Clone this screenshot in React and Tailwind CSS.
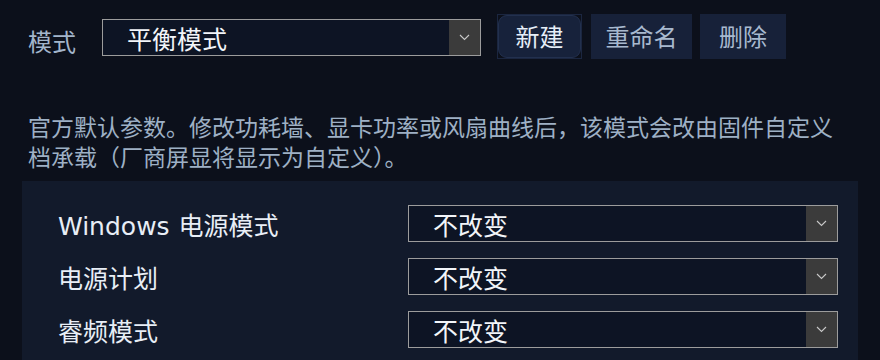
import { useState } from 'react';

const FONT = { fontFamily: '"Noto Sans", "Noto Sans CJK SC", sans-serif' };
const LATIN = { fontFamily: '"DejaVu Sans", "Noto Sans CJK SC", sans-serif' };

function Chevron() {
  return (
    <svg width="11" height="7" viewBox="0 0 11 7" fill="none">
      <path d="M1 1l4.5 4.5L10 1" stroke="#c9c9c9" strokeWidth="1.1" />
    </svg>
  );
}

function Select({ value, className = '' }) {
  return (
    <div className={`flex h-[37px] border border-[#9c9c9c] bg-[#0d1424] ${className}`}>
      <div className="flex-1 flex items-center pl-[24px] text-[25px] text-[#f2f5f9] leading-none pt-[3px]">{value}</div>
      <div className="w-[31px] bg-[#3b3b3b] flex items-center justify-center">
        <Chevron />
      </div>
    </div>
  );
}

const ROWS = [
  { label: '电源模式', prefix: 'Windows', value: '不改变' },
  { label: '电源计划', value: '不改变' },
  { label: '睿频模式', value: '不改变' },
];

export default function App() {
  const [mode] = useState('平衡模式');

  return (
    <div className="w-[880px] h-[360px] overflow-hidden bg-[#0c101b]" style={FONT}>
      {/* 顶部：模式选择 + 按钮 */}
      <div className="flex items-start pl-[28px] pt-[14px]">
        <div className="w-[74px] mt-[13px] text-[24px] leading-[30px] text-[#a3b5cb]">模式</div>
        <Select value={mode} className="w-[379px] mt-[5px]" />
        <div className="ml-[16px] w-[85px] h-[45px] border border-[#1b2640]">
          <button className="w-full h-full rounded-[9px] bg-[#17223b] border border-[#22304e] text-[24px] text-[#e6eef8] leading-none">
            新建
          </button>
        </div>
        <button className="ml-[9px] w-[101px] h-[45px] bg-[#172139] text-[24px] text-[#a8b9cf] leading-none">
          重命名
        </button>
        <button className="ml-[8px] w-[86px] h-[45px] bg-[#172139] text-[24px] text-[#a8b9cf] leading-none">
          删除
        </button>
      </div>

      <p className="mt-[53px] ml-[28px] w-[845px] text-[23px] leading-[30px] text-[#9eb0c5] whitespace-nowrap">
        官方默认参数。修改功耗墙、显卡功率或风扇曲线后，该模式会改由固件自定义
        <br />
        档承载（厂商屏显将显示为自定义）。
      </p>

      <div className="mt-[9px] ml-[22px] w-[836px] h-[200px] bg-[#121a2b] pt-[24px] pl-[36px] pr-[20px] flex flex-col gap-[16px]">
        {ROWS.map((r) => (
          <div key={r.label} className="flex items-center">
            <div className="w-[350px] pt-[4px] text-[25px] text-[#e8eef6] leading-none">
              {r.prefix && <span style={LATIN} className="text-[25px] mr-[9px]">{r.prefix}</span>}
              {r.label}
            </div>
            <Select value={r.value} className="w-[430px]" />
          </div>
        ))}
      </div>
    </div>
  );
}
